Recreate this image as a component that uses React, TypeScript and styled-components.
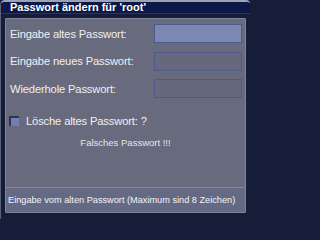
import React from "react";
import styled, { createGlobalStyle } from "styled-components";

const Global = createGlobalStyle`
  html, body {
    margin: 0;
    padding: 0;
    background: #161d38;
  }
`;

const Window = styled.div`
  width: 250px;
  height: 219px;
  box-sizing: border-box;
  background: #161d38;
  border-top: 2px solid #9ea3b2;
  border-left: 1px solid #5a6078;
  border-radius: 5px 4px 0 0;
  display: flex;
  flex-direction: column;
  font-family: "Liberation Sans", Arial, sans-serif;
  color: #f2f2f2;
  overflow: hidden;
`;

const TitleBar = styled.div`
  height: 11px;
  background: #0c1848;
  border-bottom: 1px solid #2c3558;
  padding-left: 9px;
  font-weight: bold;
  font-size: 11px;
  line-height: 11px;
  color: #ffffff;
  white-space: nowrap;
`;

const Frame = styled.div`
  flex: 1;
  display: flex;
  flex-direction: column;
  padding: 4px 4px 6px 4px;
`;

const Panel = styled.div`
  flex: 1;
  display: flex;
  flex-direction: column;
  background: #686a7d;
  border: 1px solid #7f849c;
  border-radius: 1px;
`;

const Form = styled.div`
  display: grid;
  grid-template-columns: 1fr 88px;
  grid-auto-rows: 19px;
  row-gap: 8.5px;
  align-items: center;
  padding: 5px 3px 0 4px;
`;

const Label = styled.span`
  font-size: 11.2px;
  letter-spacing: -0.15px;
  white-space: nowrap;
  color: #f0f0f2;
`;

const Field = styled.div<{ $active?: boolean }>`
  height: 19px;
  box-sizing: border-box;
  border: 1px solid #4c5a8c;
  background: ${(p) => (p.$active ? "#7a88b2" : "#66687e")};
`;

const CheckRow = styled.div`
  display: flex;
  align-items: center;
  gap: 7px;
  padding: 17px 0 0 3px;
`;

const Box = styled.div`
  width: 10px;
  height: 10px;
  box-sizing: border-box;
  background: #6f80b0;
  border-top: 2px solid #2c3552;
  border-left: 2px solid #2c3552;
`;

const Message = styled.div`
  text-align: center;
  font-size: 9.5px;
  color: #e6e6ea;
  padding-top: 10px;
`;

const Spacer = styled.div`
  flex: 1;
`;

const StatusBar = styled.div`
  height: 24px;
  display: flex;
  align-items: center;
  padding-left: 2px;
  background: #646a84;
  border-top: 1px solid #7e88aa;
  font-size: 9.2px;
  white-space: nowrap;
  color: #f4f4f6;
`;

export default function App() {
  return (
    <>
      <Global />
      <Window>
        <TitleBar>Passwort ändern für 'root'</TitleBar>
        <Frame>
          <Panel>
            <Form>
              <Label>Eingabe altes Passwort:</Label>
              <Field $active />
              <Label>Eingabe neues Passwort:</Label>
              <Field />
              <Label>Wiederhole Passwort:</Label>
              <Field />
            </Form>
            <CheckRow>
              <Box />
              <Label>Lösche altes Passwort: ?</Label>
            </CheckRow>
            <Message>Falsches Passwort !!!</Message>
            <Spacer />
            <StatusBar>Eingabe vom alten Passwort (Maximum sind 8 Zeichen)</StatusBar>
          </Panel>
        </Frame>
      </Window>
    </>
  );
}
